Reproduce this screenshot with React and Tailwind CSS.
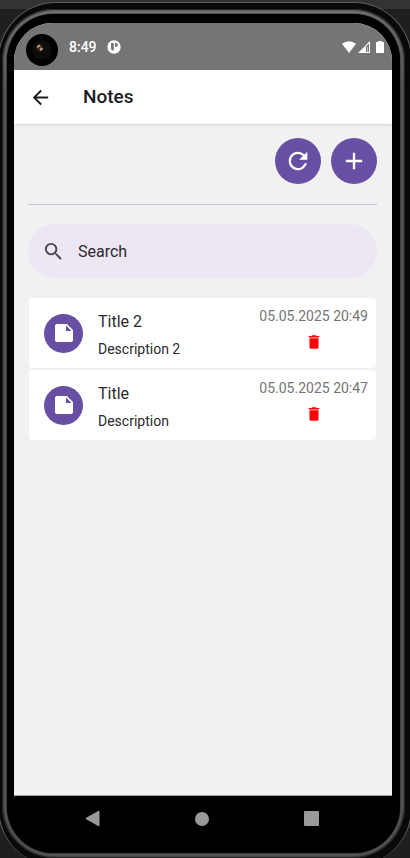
import React from "react";

const notes = [
  { title: "Title 2", description: "Description 2", date: "05.05.2025 20:49" },
  { title: "Title", description: "Description", date: "05.05.2025 20:47" },
];

function Icon({ d, className }) {
  return (
    <svg viewBox="0 0 24 24" fill="currentColor" aria-hidden="true" className={className}>
      <path d={d} />
    </svg>
  );
}

const ARROW = "M20 11H7.8l5.6-5.6L12 4l-8 8 8 8 1.4-1.4L7.8 13H20v-2z";
const REFRESH =
  "M17.65 6.35A7.96 7.96 0 0 0 12 4a8 8 0 1 0 7.73 10h-2.08A6 6 0 1 1 12 6c1.66 0 3.14.69 4.22 1.78L13 11h7V4l-2.35 2.35z";
const PLUS = "M19 13h-6v6h-2v-6H5v-2h6V5h2v6h6v2z";
const SEARCH =
  "M9.5 3A6.5 6.5 0 0 1 16 9.5c0 1.61-.59 3.09-1.56 4.23l.27.27h.79l5 5-1.5 1.5-5-5v-.79l-.27-.27A6.52 6.52 0 0 1 9.5 16a6.5 6.5 0 0 1 0-13m0 2C7 5 5 7 5 9.5S7 14 9.5 14 14 12 14 9.5 12 5 9.5 5z";
const NOTE = "M14 10V4.5l5.5 5.5M5 3c-1.11 0-2 .89-2 2v14a2 2 0 0 0 2 2h14a2 2 0 0 0 2-2V9l-6-6H5z";
const TRASH = "M19 4h-3.5l-1-1h-5l-1 1H5v2h14M6 19a2 2 0 0 0 2 2h8a2 2 0 0 0 2-2V7H6v12z";

function StatusBar() {
  return (
    <div className="relative flex h-[47px] items-center bg-[#757575] pr-2 pl-[55px] text-white">
      <div className="absolute top-[11px] left-3 flex size-8 items-center justify-center rounded-full bg-black">
        <div className="flex size-5 items-center justify-center rounded-full bg-[#0c0c0c]">
          <svg viewBox="0 0 8 8" className="size-2 -translate-x-0.5 -translate-y-0.5" aria-hidden="true">
            <circle cx="4" cy="4" r="3.6" fill="#35241c" />
            <path d="M1.2 3.5 3 1.3l1.2 1M4 6.4l2.6-2.2M3.8 4.6l1-.8" stroke="#d9b49c" strokeWidth="1.3" fill="none" />
          </svg>
        </div>
      </div>
      <span className="text-sm font-medium">8:49</span>
      <svg viewBox="0 0 14 14" className="ml-2.5 size-3.5" aria-hidden="true">
        <circle cx="7" cy="7" r="6.7" fill="white" />
        <path d="M4 3h2.8v7.6A2.8 2.8 0 0 1 4 8z" fill="#757575" />
        <path d="M8 3h1a1.8 1.8 0 0 1 0 3.8H8z" fill="#757575" />
      </svg>
      <div className="ml-auto flex items-center">
        <svg viewBox="0 0 14 12" className="h-3 w-3.5" aria-hidden="true">
          <path d="M0 2.8a11 11 0 0 1 14 0L7 12z" fill="white" />
        </svg>
        <svg viewBox="0 0 12 12" className="ml-0.5 size-3" aria-hidden="true">
          <path d="M0 12 12 0v12z" fill="white" />
          <path d="M8 5.5 11 2.5V11H8z" fill="#757575" />
          <path d="M9.5 6V11" stroke="white" strokeWidth=".6" />
        </svg>
        <svg viewBox="0 0 8 12" className="ml-1.5 h-3 w-2" aria-hidden="true">
          <path d="M2.2 0h3.6v1H8v11H0V1h2.2z" fill="white" />
        </svg>
      </div>
    </div>
  );
}

function NoteCard({ note }) {
  return (
    <li className="flex h-[70px] items-center rounded bg-white pr-2 pl-[15px]">
      <span className="flex size-[39px] shrink-0 items-center justify-center rounded-full bg-[#6750a4] text-white">
        <Icon d={NOTE} className="size-6" />
      </span>
      <div className="ml-[15px] min-w-0 flex-1 pt-1">
        <h2 className="text-base leading-7 text-[#2b2a2e]">{note.title}</h2>
        <p className="text-sm leading-[26px] text-[#2b2a2e]">{note.description}</p>
      </div>
      <div className="flex flex-col items-center gap-[7px] self-stretch pt-2">
        <time className="text-sm leading-5 text-[#757575]">{note.date}</time>
        <button type="button" aria-label={"Delete " + note.title} className="text-[#ff0000]">
          <Icon d={TRASH} className="size-[18px]" />
        </button>
      </div>
    </li>
  );
}

export default function App() {
  return (
    <div className="flex h-screen flex-col overflow-hidden bg-gradient-to-b from-[#333333] from-[9px] to-[#1f1f1f] to-[9px] pt-0.5 font-['Roboto','Noto_Sans',sans-serif]">
      <div className="-mx-0.5 -mb-2 flex flex-1 flex-col rounded-[58px] border-x border-t border-[#5f5f5f] bg-[#090909] pt-1.5 pr-1.5 pb-2 pl-[3px]">
        <div className="flex flex-1 flex-col rounded-[52px] bg-gradient-to-b from-[#787878] to-[#585858] to-[80px] p-[5px] shadow-[inset_0_0_2px_1px_#111111]">
          <div className="flex flex-1 flex-col rounded-[46px] bg-black pt-[9px] pr-2 pl-[7px] shadow-[0_0_2px_#000000]">
            <div className="flex flex-1 flex-col overflow-hidden rounded-t-[38px] bg-[#f1f1f1]">
              <StatusBar />
              <header className="relative flex h-[54px] items-center bg-white pt-px pl-[15px] shadow">
                <button type="button" aria-label="Back" className="text-[#1c1b1f]">
                  <Icon d={ARROW} className="size-[23px]" />
                </button>
                <h1 className="ml-[31px] text-[19px] font-medium text-[#1c1b1f]">Notes</h1>
              </header>
              <main className="flex-1 border-b border-[#a5a5a5] pt-3.5 pr-[15px] pl-3.5">
                <div className="flex justify-end gap-2.5 border-b border-[#cac4d8] pb-5">
                  <button type="button" aria-label="Refresh" className="flex size-[46px] items-center justify-center rounded-full bg-[#6750a4] text-white">
                    <Icon d={REFRESH} className="size-7" />
                  </button>
                  <button type="button" aria-label="Add note" className="flex size-[46px] items-center justify-center rounded-full bg-[#6750a4] text-white">
                    <Icon d={PLUS} className="size-7" />
                  </button>
                </div>
                <label className="mt-[19px] flex h-[54px] items-center rounded-full bg-[#ede7f3] pl-3.5 text-[#49454f]">
                  <Icon d={SEARCH} className="size-[23px]" />
                  <input
                    type="text"
                    aria-label="Search"
                    placeholder="Search"
                    className="ml-[13px] min-w-0 flex-1 bg-transparent pt-0.5 text-base text-[#2b2a2e] outline-none placeholder:text-[#2b2a2e]"
                  />
                </label>
                <ul className="mt-5 flex flex-col gap-0.5 px-px">
                  {notes.map((note) => (
                    <NoteCard key={note.date} note={note} />
                  ))}
                </ul>
              </main>
            </div>
            <nav className="flex h-[57px] items-center justify-between pr-[73px] pb-3 pl-[71px] text-[#999999]">
              <button type="button" aria-label="Back">
                <svg viewBox="0 0 15 17" className="h-[17px] w-[15px]" aria-hidden="true">
                  <path d="M.8 8.5 14 1v15z" fill="currentColor" stroke="currentColor" strokeLinejoin="round" />
                </svg>
              </button>
              <button type="button" aria-label="Home" className="size-3.5 rounded-full bg-[#999999]" />
              <button type="button" aria-label="Overview" className="size-[15px] rounded-[1px] bg-[#999999]" />
            </nav>
          </div>
        </div>
      </div>
    </div>
  );
}
